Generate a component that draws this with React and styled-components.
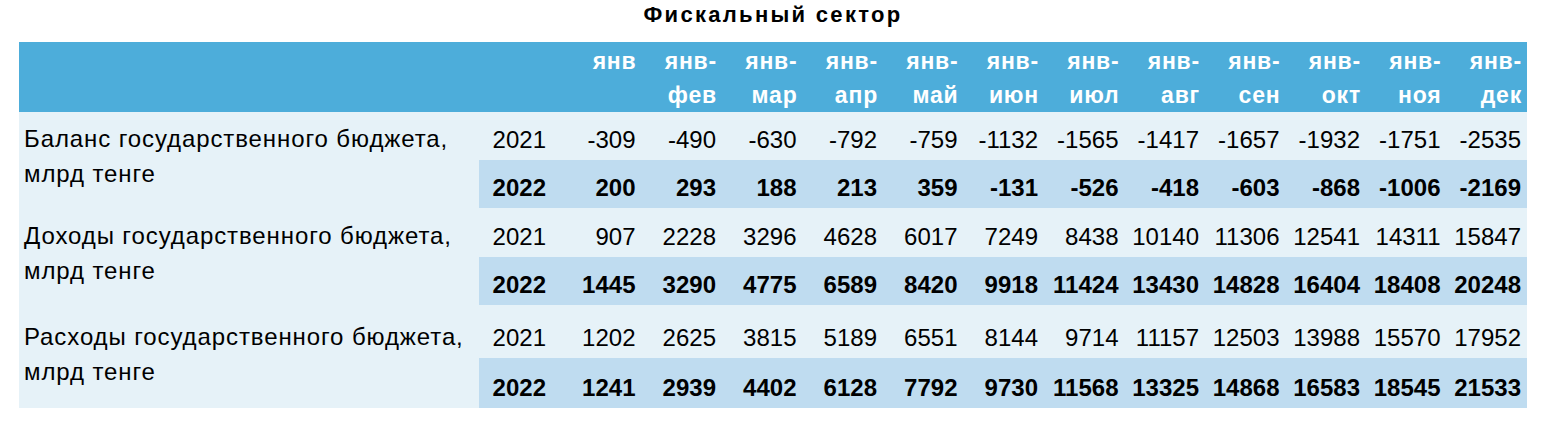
import React from "react";
import styled, { createGlobalStyle } from "styled-components";

const GlobalStyle = createGlobalStyle`
  html, body {
    margin: 0;
    padding: 0;
    background: #ffffff;
  }
  body {
    font-family: "Liberation Sans", Arial, sans-serif;
    color: #000000;
  }
`;

const Page = styled.div`
  width: 1546px;
  height: 424px;
  padding-left: 19px;
  box-sizing: border-box;
`;

const Title = styled.h2`
  width: 1508px;
  height: 42px;
  margin: 0;
  padding-top: 3px;
  box-sizing: border-box;
  text-align: center;
  font-size: 22px;
  line-height: 24px;
  font-weight: 700;
  letter-spacing: 2.3px;
`;

const Table = styled.table`
  width: 1508px;
  border-collapse: collapse;
  table-layout: fixed;
  font-family: "Liberation Sans", Arial, sans-serif;
  font-size: 24px;
`;

const HeadRow = styled.tr`
  height: 65px;
  background: #4dadda;
`;

const HeadCell = styled.th`
  padding: 2px 5px 0 0;
  vertical-align: top;
  text-align: right;
  color: #ffffff;
  font-size: 23px;
  line-height: 34px;
  font-weight: 700;
  letter-spacing: 0.8px;
  white-space: nowrap;
`;

const Row = styled.tr`
  height: ${(p) => p.$h}px;
  background: ${(p) => (p.$bold ? "#bfdcf0" : "#e6f2f8")};
  font-weight: ${(p) => (p.$bold ? 700 : 400)};
`;

const LabelCell = styled.td`
  background: #e6f2f8;
  vertical-align: top;
  padding: ${(p) => p.$h - 39}px 0 0 5px;
  font-size: 24px;
  line-height: 35px;
  letter-spacing: 0.9px;
  font-weight: 400;
`;

const YearCell = styled.td`
  vertical-align: bottom;
  text-align: right;
  padding: 0 15px 8px 0;
  line-height: 24px;
`;

const ValueCell = styled.td`
  vertical-align: bottom;
  text-align: right;
  padding: 0 6px 8px 0;
  line-height: 24px;
  white-space: nowrap;
`;

const months = ["фев", "мар", "апр", "май", "июн", "июл", "авг", "сен", "окт", "ноя", "дек"];

const groups = [
  {
    label: ["Баланс государственного бюджета,", "млрд тенге"],
    heights: [48, 48],
    rows: [
      ["2021", -309, -490, -630, -792, -759, -1132, -1565, -1417, -1657, -1932, -1751, -2535],
      ["2022", 200, 293, 188, 213, 359, -131, -526, -418, -603, -868, -1006, -2169],
    ],
  },
  {
    label: ["Доходы государственного бюджета,", "млрд тенге"],
    heights: [49, 48],
    rows: [
      ["2021", 907, 2228, 3296, 4628, 6017, 7249, 8438, 10140, 11306, 12541, 14311, 15847],
      ["2022", 1445, 3290, 4775, 6589, 8420, 9918, 11424, 13430, 14828, 16404, 18408, 20248],
    ],
  },
  {
    label: ["Расходы государственного бюджета,", "млрд тенге"],
    heights: [53, 50],
    rows: [
      ["2021", 1202, 2625, 3815, 5189, 6551, 8144, 9714, 11157, 12503, 13988, 15570, 17952],
      ["2022", 1241, 2939, 4402, 6128, 7792, 9730, 11568, 13325, 14868, 16583, 18545, 21533],
    ],
  },
];

const App = () => {
  return (
    <Page>
      <GlobalStyle />
      <Title>Фискальный сектор</Title>
      <Table>
        <colgroup>
          <col style={{ width: 460 }} />
          <col style={{ width: 82 }} />
          {Array.from({ length: 12 }).map((_, i) => (
            <col key={i} style={{ width: 80.5 }} />
          ))}
        </colgroup>
        <thead>
          <HeadRow>
            <HeadCell />
            <HeadCell />
            <HeadCell>янв</HeadCell>
            {months.map((m) => (
              <HeadCell key={m}>
                янв-
                <br />
                {m}
              </HeadCell>
            ))}
          </HeadRow>
        </thead>
        <tbody>
          {groups.map((g) =>
            g.rows.map(([year, ...values], ri) => (
              <Row key={g.label[0] + year} $h={g.heights[ri]} $bold={ri === 1}>
                {ri === 0 && (
                  <LabelCell rowSpan={2} $h={g.heights[0]}>
                    {g.label[0]}
                    <br />
                    {g.label[1]}
                  </LabelCell>
                )}
                <YearCell>{year}</YearCell>
                {values.map((v, i) => (
                  <ValueCell key={i}>{v}</ValueCell>
                ))}
              </Row>
            ))
          )}
        </tbody>
      </Table>
    </Page>
  );
};

export default App;
